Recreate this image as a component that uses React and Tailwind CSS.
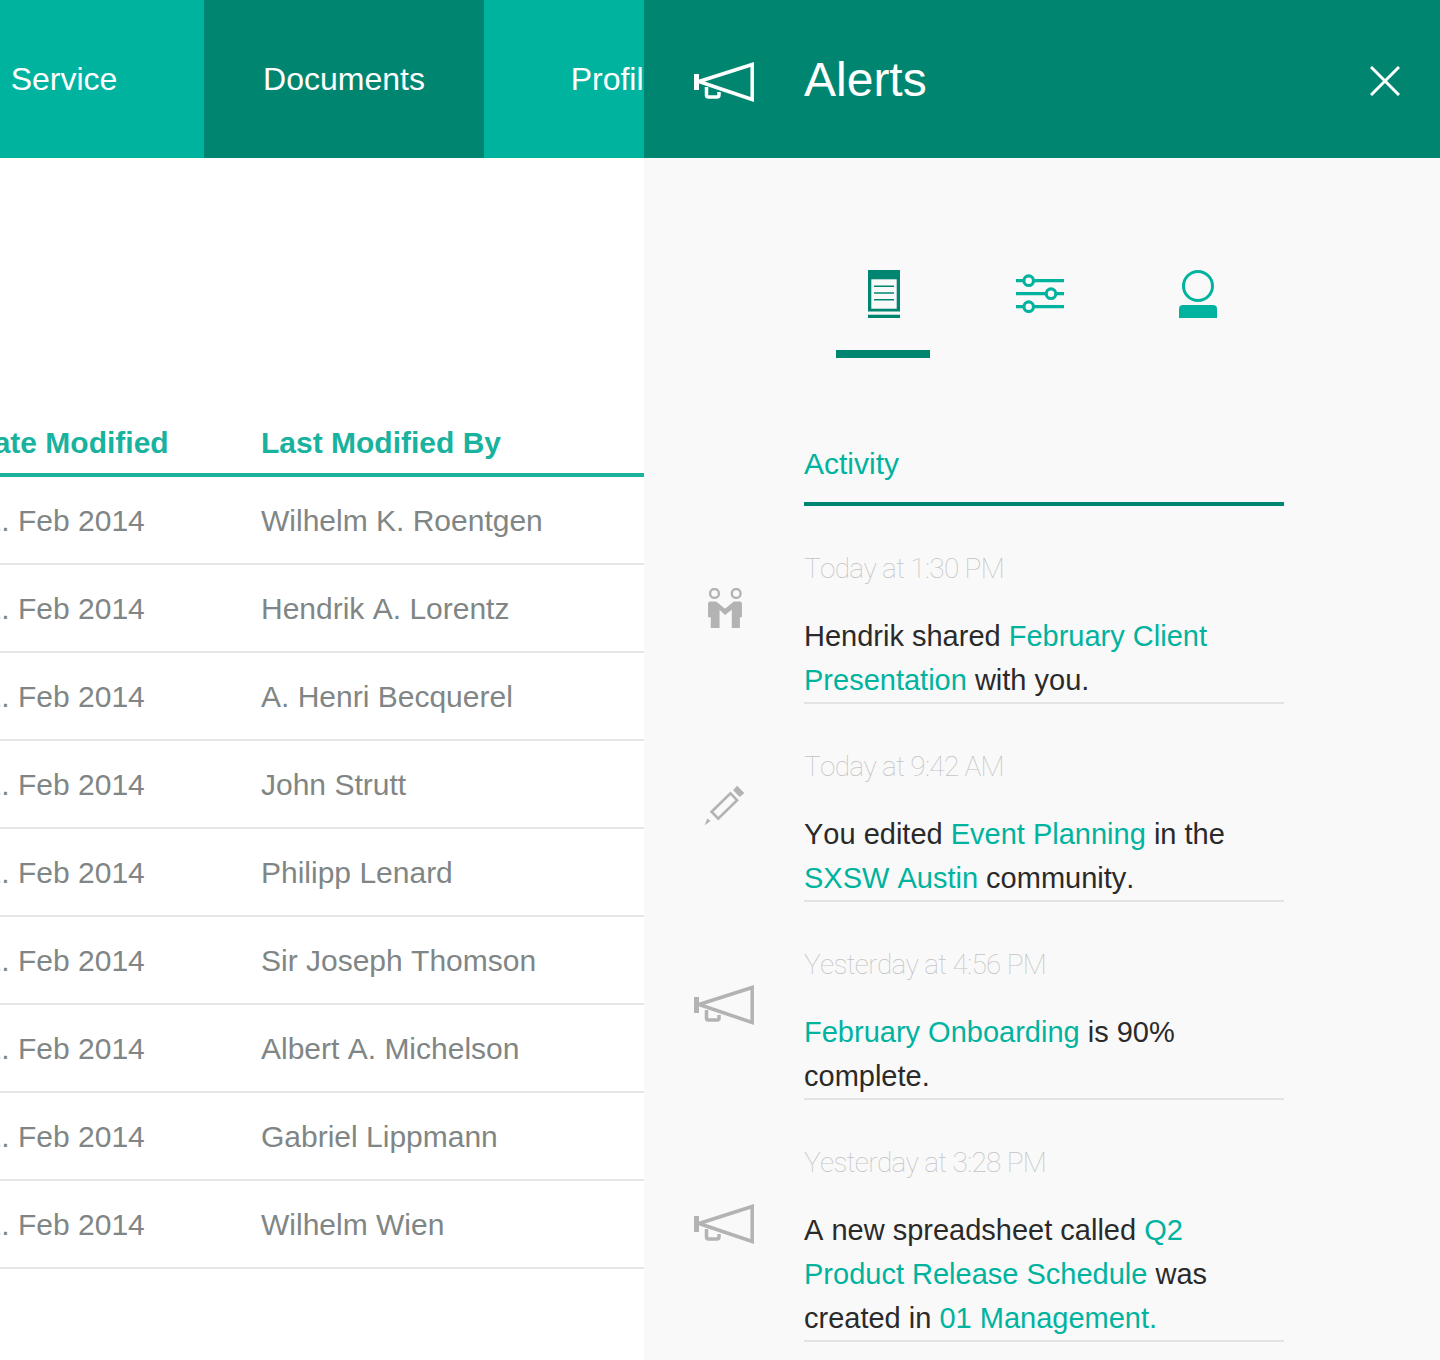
const rows = [
  "Wilhelm K. Roentgen",
  "Hendrik A. Lorentz",
  "A. Henri Becquerel",
  "John Strutt",
  "Philipp Lenard",
  "Sir Joseph Thomson",
  "Albert A. Michelson",
  "Gabriel Lippmann",
  "Wilhelm Wien",
];

const Megaphone = ({ className }) => (
  <svg viewBox="0 0 60 40" className={className} fill="none" stroke="currentColor" strokeWidth="3.5">
    <rect x="0" y="12" width="5" height="16" fill="currentColor" stroke="none" />
    <path d="M5 19.5 L58.2 2.5 V37.5 Z" />
    <path d="M12.5 25 V33 a2 2 0 0 0 2 2 H23 a2 2 0 0 0 2-2 V30" />
  </svg>
);

const Link = ({ children }) => <span className="text-[#00b39f]">{children}</span>;

const Stamp = ({ children }) => (
  <p className="mb-[23px] pt-px font-['Roboto',sans-serif] text-[28px] leading-[44px] font-thin tracking-[-0.7px] text-[#c4c4c4]">
    {children}
  </p>
);

const Body = ({ children }) => (
  <p className="border-b-2 border-[#e3e3e3] text-[29px] leading-[44px] text-[#2a2a2a]">{children}</p>
);

export default function App() {
  return (
    <div className="flex h-[1360px] w-[1440px] overflow-hidden bg-white font-['Liberation_Sans',Arial,sans-serif] [font-kerning:none]">
      {/* Left, documents table */}
      <div className="w-[644px] shrink-0 overflow-hidden">
        <nav className="-ml-[76px] flex h-[158px] w-[840px] text-[32px] text-white">
          <div className="flex w-[280px] items-center justify-center bg-[#00b39f]">Service</div>
          <div className="flex w-[280px] items-center justify-center bg-[#008670]">Documents</div>
          <div className="flex w-[280px] items-center justify-center bg-[#00b39f] pr-[16px]">Profile</div>
        </nav>

        <div className="mt-[254px]">
          <div className="flex h-[65px] border-b-4 border-[#19b29e] pt-[9px] pb-px text-[30px] leading-[44px] font-bold text-[#19b29e]">
            <div className="-ml-[28px] w-[289px] shrink-0">Date Modified</div>
            <div>Last Modified By</div>
          </div>
          {rows.map((name) => (
            <div
              key={name}
              className="flex h-[88px] items-center border-b-2 border-[#e6e6e6] text-[30px] text-[#808685]"
            >
              <div className="-ml-[32px] w-[293px] shrink-0">12. Feb 2014</div>
              <div>{name}</div>
            </div>
          ))}
        </div>
      </div>

      {/* Right, alerts panel */}
      <div className="w-[796px] shrink-0 bg-[#f9f9f9]">
        <header className="flex h-[158px] items-center bg-[#008670] text-white">
          <div className="flex w-[160px] justify-center pt-[5px]">
            <Megaphone className="h-[40px] w-[60px]" />
          </div>
          <h1 className="pt-[2px] text-[48px] leading-none">Alerts</h1>
          <button className="mr-[40px] ml-auto pt-[3px]">
            <svg viewBox="0 0 30 30" className="h-[30px] w-[30px]" stroke="currentColor" strokeWidth="3">
              <path d="M1 1 L29 29 M29 1 L1 29" />
            </svg>
          </button>
        </header>

        <div className="mt-[112px] ml-[192px] flex gap-[63.5px]">
          <div className="flex h-[88px] w-[94px] justify-center border-b-8 border-[#008670] pl-[2px]">
            <svg viewBox="0 0 32 48" className="h-[48px] w-[32px]">
              <rect width="32" height="41.5" fill="#008670" />
              <rect x="3.3" y="9.3" width="25.4" height="29.4" fill="#f9f9f9" />
              <path d="M6 16.3 H26 M6 23 H26 M6 29.7 H26" stroke="#008670" strokeWidth="1.4" />
              <rect y="44.7" width="32" height="3.3" fill="#008670" />
            </svg>
          </div>
          <div className="flex h-[88px] w-[94px] justify-center pt-[4px] pr-[2px]">
            <svg viewBox="0 0 48 40" className="h-[40px] w-[48px]" stroke="#00b39f" strokeWidth="3.2" fill="#f9f9f9">
              <path d="M0 6.7 H48 M0 19.7 H48 M0 32.7 H48" />
              <circle cx="12.7" cy="6.7" r="4.8" />
              <circle cx="35" cy="19.7" r="4.8" />
              <circle cx="12.7" cy="32.7" r="4.8" />
            </svg>
          </div>
          <div className="flex h-[88px] w-[94px] justify-center">
            <svg viewBox="0 0 40 48" className="h-[48px] w-[40px]">
              <circle cx="20" cy="16" r="14.5" fill="none" stroke="#00b39f" strokeWidth="3" />
              <path d="M1 48 V39 a4 4 0 0 1 4-4 H35 a4 4 0 0 1 4 4 V48 Z" fill="#00b39f" />
            </svg>
          </div>
        </div>

        <div className="ml-[160px] w-[480px]">
          <h2 className="h-[148px] border-b-4 border-[#008670] pt-[84px] text-[30px] leading-[44px] text-[#00b39f]">
            Activity
          </h2>
        </div>

        <section className="mt-10 flex">
          <div className="flex w-[160px] justify-center pt-[42px] pl-[2px]">
            <svg viewBox="84 54 100 118" className="h-[40px] w-[34px] text-[#b3b3b3]">
              <circle cx="103" cy="70" r="13" fill="none" stroke="currentColor" strokeWidth="7" />
              <circle cx="167" cy="70" r="13" fill="none" stroke="currentColor" strokeWidth="7" />
              <path
                d="M90 94 H108 L134 115 L160 94 H178 Q184 94 184 100 V140 H178 V172 H154 V118 L134 134 L118 118 V172 H92 V140 H84 V100 Q84 94 90 94 Z"
                fill="currentColor"
              />
            </svg>
          </div>
          <div className="w-[480px]">
            <Stamp>Today at 1:30 PM</Stamp>
            <Body>
              Hendrik shared <Link>February Client Presentation</Link> with you.
            </Body>
          </div>
        </section>

        <section className="mt-10 flex">
          <div className="flex w-[160px] justify-center pt-[41px]">
            <svg viewBox="70 46 124 124" className="h-[41px] w-[41px] text-[#b3b3b3]">
              <path d="M72 168 L80 147 L90 155 Z" fill="currentColor" />
              <path d="M93 127 L150 71 L170 92 L113 148 Z" fill="none" stroke="currentColor" strokeWidth="8" />
              <path d="M158 62 L170 48 L192 70 L178 82 Z" fill="currentColor" />
            </svg>
          </div>
          <div className="w-[480px]">
            <Stamp>Today at 9:42 AM</Stamp>
            <Body>
              You edited <Link>Event Planning</Link> in the <Link>SXSW Austin</Link> community.
            </Body>
          </div>
        </section>

        <section className="mt-10 flex">
          <div className="flex w-[160px] justify-center pt-[43px]">
            <Megaphone className="h-[40px] w-[60px] text-[#b3b3b3]" />
          </div>
          <div className="w-[480px]">
            <Stamp>Yesterday at 4:56 PM</Stamp>
            <Body>
              <Link>February Onboarding</Link> is 90% complete.
            </Body>
          </div>
        </section>

        <section className="mt-10 flex">
          <div className="flex w-[160px] justify-center pt-[64px]">
            <Megaphone className="h-[40px] w-[60px] text-[#b3b3b3]" />
          </div>
          <div className="w-[480px]">
            <Stamp>Yesterday at 3:28 PM</Stamp>
            <Body>
              A new spreadsheet called <Link>Q2 Product Release Schedule</Link> was created in{" "}
              <Link>01 Management.</Link>
            </Body>
          </div>
        </section>
      </div>
    </div>
  );
}
